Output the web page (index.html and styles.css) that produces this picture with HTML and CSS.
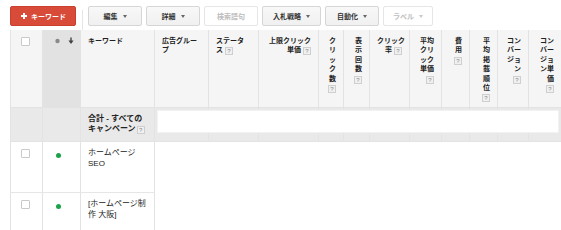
FILE: index.html
```html
<!DOCTYPE html>
<html lang="ja">
<head>
<meta charset="utf-8">
<title>キーワード</title>
<link rel="stylesheet" href="styles.css">
</head>
<body>
<div class="page">
  <div class="toolbar">
    <button class="btn btn-red"><svg class="plus" width="6" height="6" viewBox="0 0 6 6"><rect x="2" y="0" width="2" height="6" fill="#fff"/><rect x="0" y="2" width="6" height="2" fill="#fff"/></svg>キーワード</button>
    <span class="sep"></span>
    <button class="btn">編集<span class="caret"></span></button>
    <button class="btn">詳細<span class="caret"></span></button>
    <button class="btn btn-off">検索語句</button>
    <button class="btn">入札戦略<span class="caret"></span></button>
    <button class="btn">自動化<span class="caret"></span></button>
    <button class="btn btn-off btn-label">ラベル<span class="caret"></span></button>
  </div>

  <div class="grid-wrap">
    <table class="grid">
      <colgroup>
        <col class="w-chk"><col class="w-stat"><col class="w-kw"><col class="w-grp"><col class="w-st"><col class="w-cpc">
        <col class="w-clk"><col class="w-imp"><col class="w-ctr"><col class="w-acpc"><col class="w-cost"><col class="w-pos">
        <col class="w-conv"><col class="w-cpa">
      </colgroup>
      <thead>
        <tr class="head">
          <th class="h-chk"><span class="chk"></span></th>
          <th class="h-stat"><svg width="20" height="8" viewBox="0 0 20 8"><circle cx="2.5" cy="4" r="2.2" fill="#8a8a8a"/><path d="M16 0.5V5" stroke="#444" stroke-width="1.4"/><path d="M13.4 3.6L16 7L18.6 3.6Z" fill="#444"/></svg></th>
          <th>キーワード</th>
          <th>広告グルー<br>プ</th>
          <th>ステータ<br>ス <span class="q">?</span></th>
          <th class="num">上限クリック<br>単価 <span class="q">?</span></th>
          <th class="num">ク<br>リ<br>ッ<br>ク<br>数<br><span class="q">?</span></th>
          <th class="num">表<br>示<br>回<br>数<br><span class="q">?</span></th>
          <th class="num">クリック<br>率 <span class="q">?</span></th>
          <th class="num">平均<br>クリ<br>ック<br>単価<br><span class="q">?</span></th>
          <th class="num">費<br>用<br><span class="q">?</span></th>
          <th class="num">平<br>均<br>掲<br>載<br>順<br>位<br><span class="q">?</span></th>
          <th class="num">コン<br>バー<br>ジョ<br>ン<br><span class="q">?</span></th>
          <th class="num">コン<br>バー<br>ジョ<br>ン単<br>価<br><span class="q">?</span></th>
        </tr>
        <tr class="total">
          <td></td>
          <td></td>
          <td class="total-label">合計 - すべての<br>キャンペーン<span class="q">?</span></td>
          <td></td><td></td><td></td><td></td><td></td><td></td><td></td><td></td><td></td><td></td><td></td>
        </tr>
      </thead>
      <tbody>
        <tr class="row row-1">
          <td class="c-chk"><span class="chk"></span></td>
          <td class="c-stat"><span class="dot"></span></td>
          <td class="c-kw">ホームページ<br>SEO</td>
          <td class="c-rest" colspan="11"></td>
        </tr>
        <tr class="row row-2">
          <td class="c-chk"><span class="chk"></span></td>
          <td class="c-stat"><span class="dot"></span></td>
          <td class="c-kw">[ホームページ制<br>作 大阪]</td>
          <td class="c-rest" colspan="11"></td>
        </tr>
      </tbody>
    </table>
    <div class="total-box"></div>
  </div>
</div>
</body>
</html>
```

FILE: styles.css
```css
* { box-sizing: border-box; }

html, body {
  margin: 0;
  background: #fff;
}

body {
  width: 561px;
  height: 230px;
  overflow: hidden;
  font-family: "Liberation Sans", "Noto Sans CJK JP", sans-serif;
  color: #333;
}

.page {
  padding: 6px 0 0 10px;
}

/* toolbar */
.toolbar {
  display: flex;
  align-items: center;
  height: 20px;
  margin-bottom: 4px;
}

.btn {
  height: 20px;
  min-width: 54px;
  padding: 0 10px;
  margin: 0 4px 0 0;
  display: flex;
  align-items: center;
  justify-content: center;
  font-family: inherit;
  font-size: 7px;
  font-weight: bold;
  line-height: 1;
  color: #333;
  background: linear-gradient(#f8f8f8, #f0f0f0);
  border: 1px solid #d6d6d6;
  border-radius: 2px;
}

.btn-red {
  min-width: 63px;
  padding: 0 9px 0 10px;
  margin-right: 6px;
  color: #fff;
  background: #d84b38;
  border-color: #c9402e;
  justify-content: flex-start;
}

.plus { margin-right: 4px; }

.sep {
  width: 1px;
  height: 24px;
  margin: 4px 5px 0 0;
  background: #e6e6e6;
  align-self: flex-start;
}

.btn-off {
  color: #bdbdbd;
  background: #fff;
  border-color: #e6e6e6;
}

.btn-label {
  min-width: 46px;
  padding: 0 9px;
}

.caret {
  width: 0;
  height: 0;
  margin-left: 5px;
  border-left: 2.5px solid transparent;
  border-right: 2.5px solid transparent;
  border-top: 3px solid #666;
}

.btn-off .caret { border-top-color: #c8c8c8; }

/* grid */
.grid-wrap {
  position: relative;
  width: 551px;
}

.grid {
  width: 551px;
  border-collapse: collapse;
  table-layout: fixed;
}

.w-chk { width: 32px; }
.w-stat { width: 38px; }
.w-kw { width: 74px; }
.w-grp { width: 54px; }
.w-st { width: 50px; }
.w-cpc { width: 60px; }
.w-clk { width: 25px; }
.w-imp { width: 26px; }
.w-ctr { width: 40px; }
.w-acpc { width: 32px; }
.w-cost { width: 28px; }
.w-pos { width: 28px; }
.w-conv { width: 31px; }
.w-cpa { width: 33px; }

.grid th,
.grid td {
  border: 1px solid #e3e3e3;
  padding: 0;
  vertical-align: top;
}

.head th {
  height: 77px;
  padding: 6px 7px 0;
  background: #f5f5f5;
  font-size: 7px;
  line-height: 9.4px;
  font-weight: bold;
  text-align: left;
  white-space: nowrap;
  color: #222;
  border-top: none;
}

.head th.num { text-align: right; padding-right: 7px; }

.head th.h-chk { padding: 7px 0 0 10px; }

.head th.h-stat {
  background: #e2e2e2;
  padding: 7px 0 0 12px;
}

.h-stat svg { display: block; }

.chk {
  display: block;
  width: 9px;
  height: 9px;
  background: #fff;
  border: 1px solid #c9c9c9;
  border-radius: 1px;
}

.q {
  display: inline-block;
  width: 8px;
  height: 8px;
  border: 1px solid #cfcfcf;
  background: #f0f0f0;
  color: #8a8a8a;
  font-size: 6px;
  line-height: 6px;
  text-align: center;
  font-weight: normal;
  vertical-align: -1px;
}

.total td {
  height: 34px;
  background: #e9e9e9;
  vertical-align: middle;
}

.total td.total-label {
  padding: 0 4px 0 7px;
  font-size: 8px;
  line-height: 10px;
  font-weight: bold;
  white-space: nowrap;
  color: #222;
}

.total-label .q { margin-left: 1px; }

.total-box {
  position: absolute;
  left: 147px;
  top: 80px;
  width: 402px;
  height: 23px;
  background: #fff;
  border: 1px solid #f2f2f2;
}

/* body rows */
.row td {
  border-top: none;
  border-bottom: 1px solid #e6e6e6;
}

.row-1 td { height: 51px; }
.row-2 td { height: 40px; }

.row td.c-rest {
  border: none;
}

.row td.c-chk { padding: 7px 0 0 10px; }

.row td.c-stat { padding: 11px 0 0 13px; }

.dot {
  display: block;
  width: 5px;
  height: 5px;
  border-radius: 50%;
  background: #1aa34a;
}

.row td.c-kw {
  padding: 5px 4px 0 7px;
  font-size: 8px;
  line-height: 11px;
  color: #222;
  white-space: nowrap;
}
```
